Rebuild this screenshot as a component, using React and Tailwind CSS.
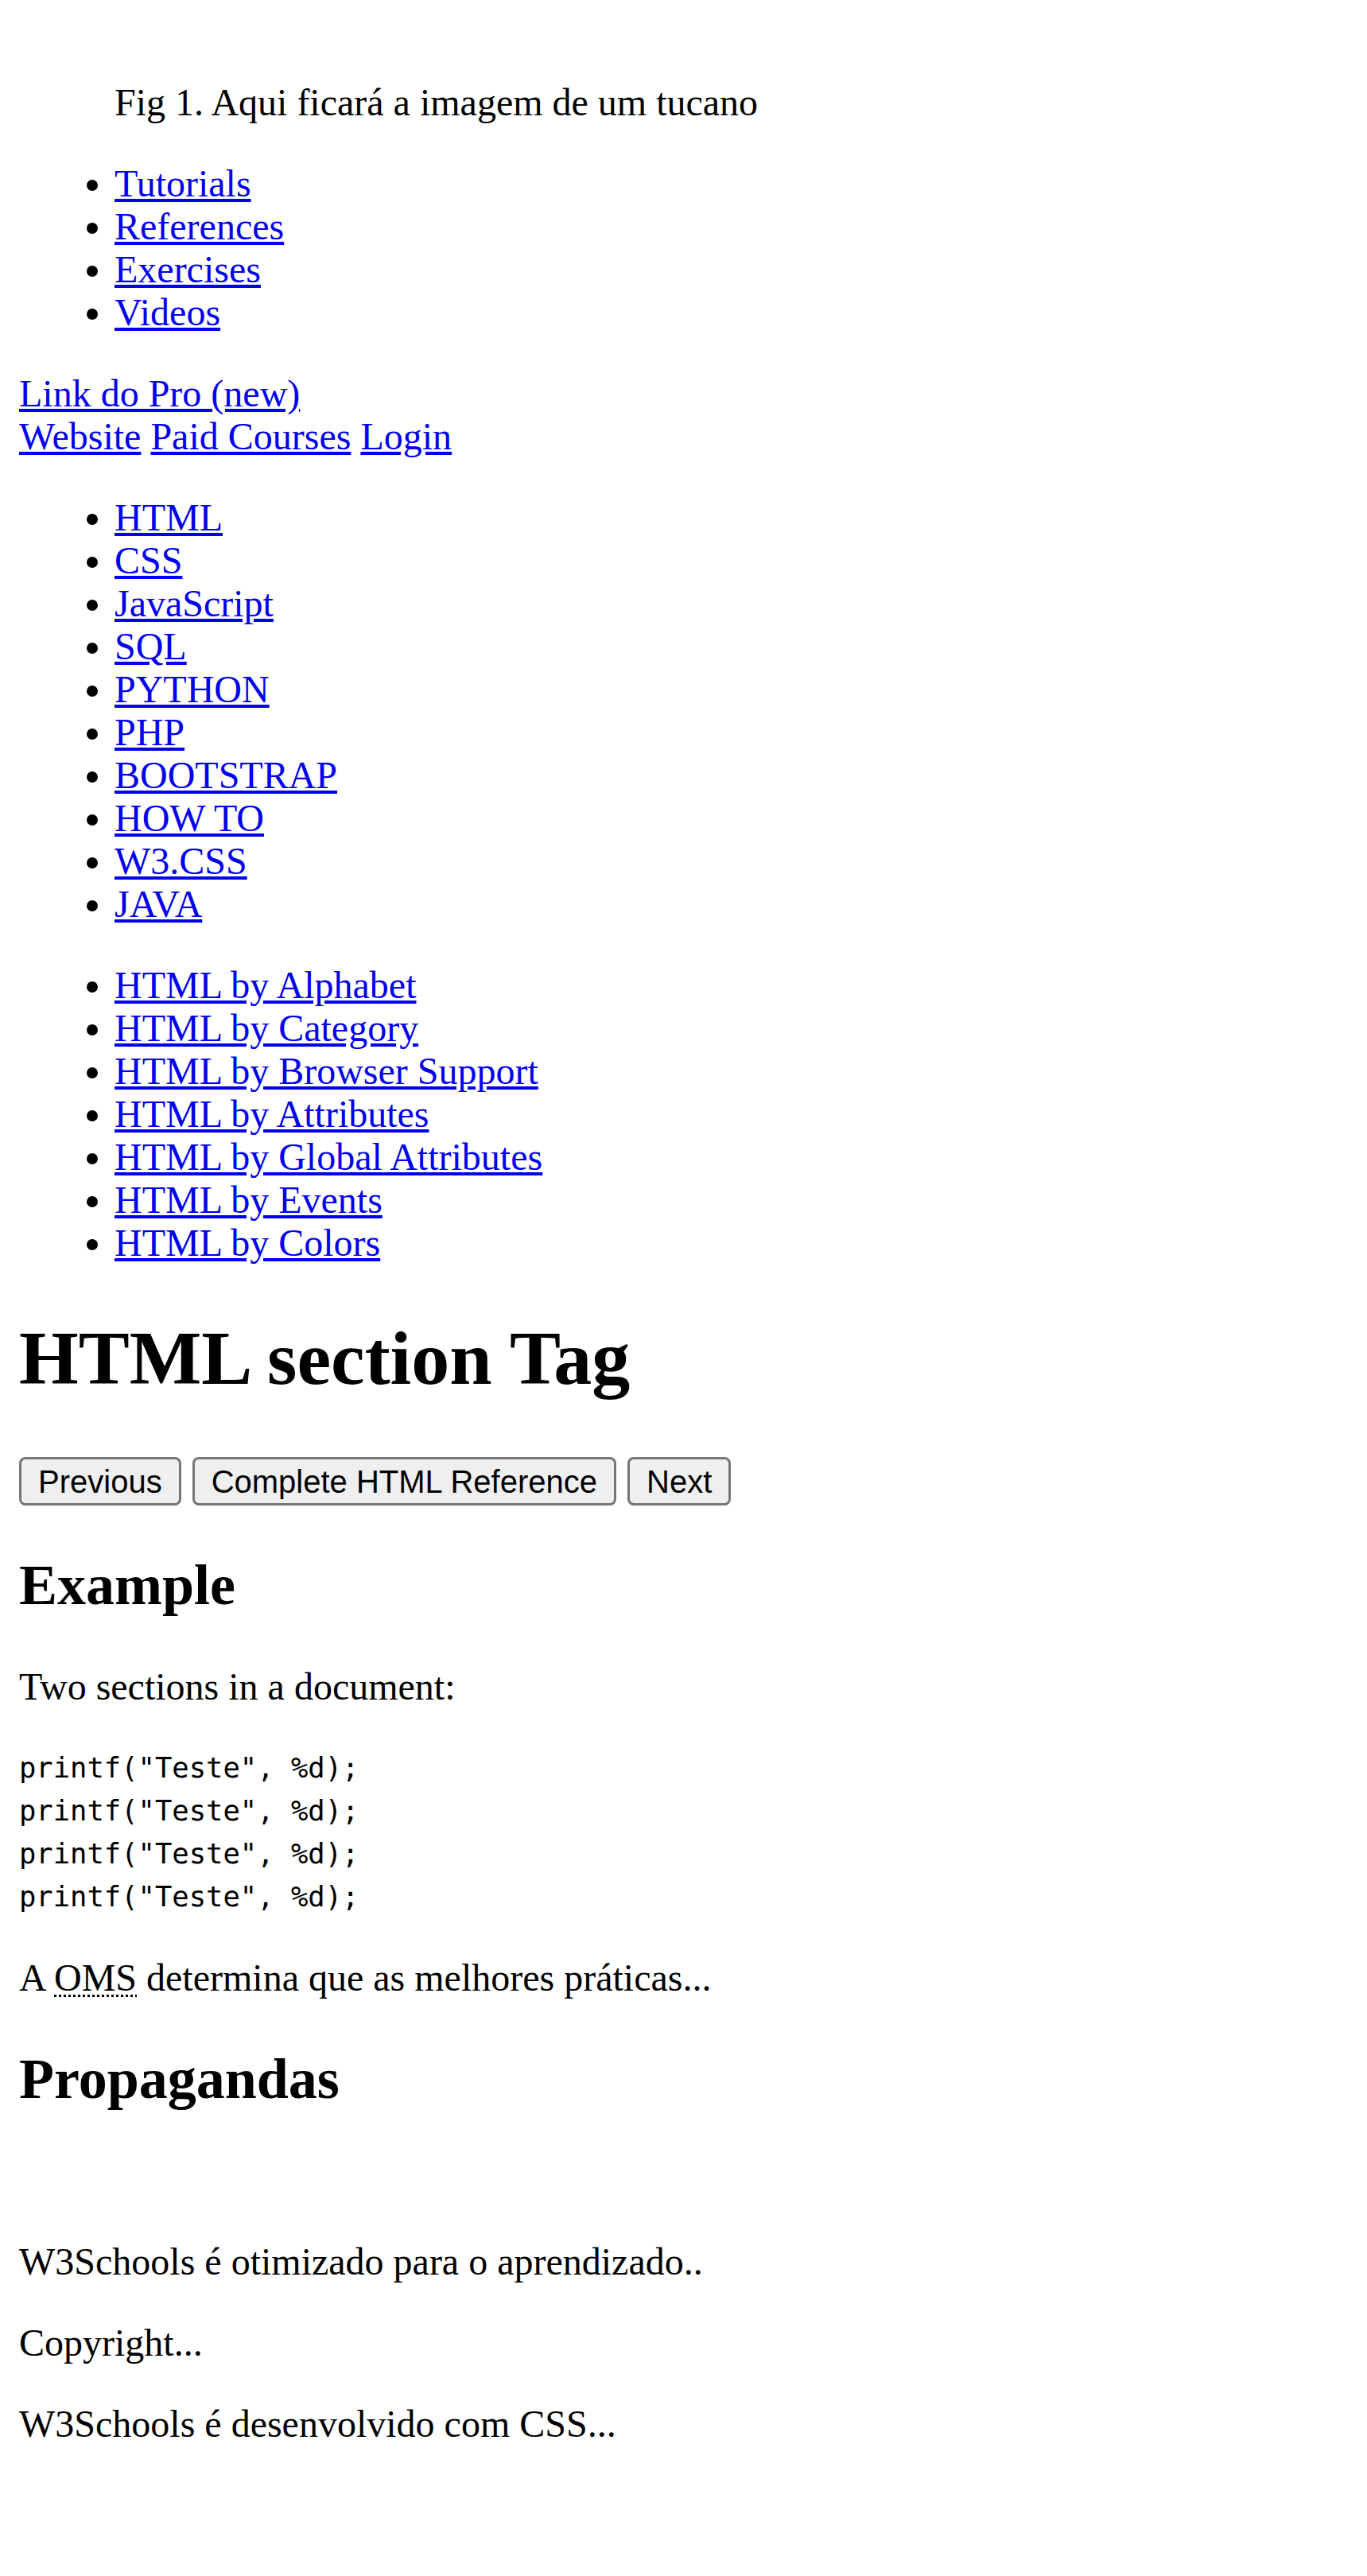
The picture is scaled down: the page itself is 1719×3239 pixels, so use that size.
const mainLinks = ["Tutorials", "References", "Exercises", "Videos"];

const topics = [
  "HTML",
  "CSS",
  "JavaScript",
  "SQL",
  "PYTHON",
  "PHP",
  "BOOTSTRAP",
  "HOW TO",
  "W3.CSS",
  "JAVA",
];

const htmlRefs = [
  "HTML by Alphabet",
  "HTML by Category",
  "HTML by Browser Support",
  "HTML by Attributes",
  "HTML by Global Attributes",
  "HTML by Events",
  "HTML by Colors",
];

const linkCls = "text-[#0000ee] underline";

const LinkList = ({ items }) => (
  <ul className="list-disc pl-[120px] my-[48px]">
    {items.map((item) => (
      <li key={item}>
        <a href="#" className={linkCls}>
          {item}
        </a>
      </li>
    ))}
  </ul>
);

const NavButton = ({ children }) => (
  <button
    type="button"
    className="inline-flex items-center h-[61px] px-[21px] border-[3px] border-[#767676] rounded-[8px] bg-[#efefef] font-['Liberation_Sans',Arial,sans-serif] text-[40px] leading-[46px] text-black"
  >
    {children}
  </button>
);

export default function App() {
  return (
    <div className="min-h-screen bg-white text-black font-['Liberation_Serif','Times_New_Roman',serif] text-[48px] leading-[54px] px-[24px] pt-[24px] pb-[24px]">
      <figure className="mx-[120px] mt-[48px] mb-[48px] pt-[30px]">
        <figcaption>Fig 1. Aqui ficará a imagem de um tucano</figcaption>
      </figure>

      <LinkList items={mainLinks} />

      <div>
        <a href="#" className={linkCls}>
          Link do Pro (new)
        </a>
      </div>
      <div>
        <a href="#" className={linkCls}>
          Website
        </a>{" "}
        <a href="#" className={linkCls}>
          Paid Courses
        </a>{" "}
        <a href="#" className={linkCls}>
          Login
        </a>
      </div>

      <LinkList items={topics} />
      <LinkList items={htmlRefs} />

      <h1 className="text-[96px] leading-[110px] font-bold mt-[63px] mb-[63px]">
        HTML section Tag
      </h1>

      <div className="flex gap-[14px] pt-[6px]">
        <NavButton>Previous</NavButton>
        <NavButton>Complete HTML Reference</NavButton>
        <NavButton>Next</NavButton>
      </div>

      <h2 className="text-[72px] leading-[83px] font-bold my-[59px]">Example</h2>
      <p className="my-[48px]">Two sections in a document:</p>
      <pre className="font-['DejaVu_Sans_Mono',monospace] text-[35.5px] leading-[54px] my-[48px]">
        {`printf("Teste", %d);
printf("Teste", %d);
printf("Teste", %d);
printf("Teste", %d);`}
      </pre>
      <p className="my-[48px]">
        A{" "}
        <abbr
          title="Organização Mundial da Saúde"
          className="underline decoration-dotted decoration-[3px] underline-offset-[5px]"
        >
          OMS
        </abbr>{" "}
        determina que as melhores práticas...
      </p>

      <h2 className="text-[72px] leading-[83px] font-bold my-[59px]">Propagandas</h2>
      <div className="h-[54px]" />

      <footer>
        <p className="my-[48px]">W3Schools é otimizado para o aprendizado..</p>
        <p className="my-[48px]">Copyright...</p>
        <p className="my-[48px]">W3Schools é desenvolvido com CSS...</p>
      </footer>
    </div>
  );
}
